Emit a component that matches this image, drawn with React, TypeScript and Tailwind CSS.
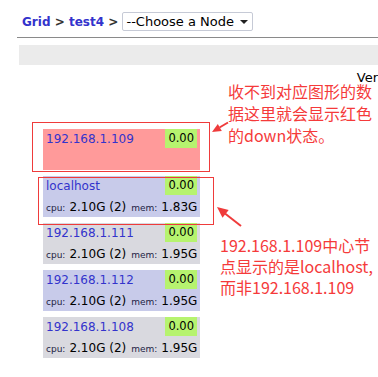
import React from "react";

type Node = {
  host: string;
  load: string;
  cpu?: string;
  mem?: string;
  bg: string;
};

const nodes: Node[] = [
  { host: "192.168.1.109", load: "0.00", bg: "bg-[#ff9a9a]" },
  { host: "localhost", load: "0.00", cpu: "2.10G (2)", mem: "1.83G", bg: "bg-[#c8cbea]" },
  { host: "192.168.1.111", load: "0.00", cpu: "2.10G (2)", mem: "1.95G", bg: "bg-[#d9d9df]" },
  { host: "192.168.1.112", load: "0.00", cpu: "2.10G (2)", mem: "1.95G", bg: "bg-[#c8cbea]" },
  { host: "192.168.1.108", load: "0.00", cpu: "2.10G (2)", mem: "1.95G", bg: "bg-[#d9d9df]" },
];

function NodeCard({ node }: { node: Node }) {
  return (
    <div className={`${node.bg} h-[41px] pl-[3px] pr-[3px]`}>
      <div className="flex h-[19px] items-center justify-between">
        <span className="text-[12px] text-[#3333cc]">{node.host}</span>
        <span className="flex h-[19px] items-center bg-[#b6f36f] px-[3px] text-[11.5px] text-black">
          {node.load}
        </span>
      </div>
      {node.cpu && (
        <div className="mt-[4px] flex h-[16px] items-baseline whitespace-nowrap leading-[16px]">
          <span className="text-[9px] text-[#222244]">cpu:</span>
          <span className="ml-[4px] text-[12px] text-black">{node.cpu}</span>
          <span className="ml-[5px] text-[9px] text-[#222244]">mem:</span>
          <span className="ml-[4px] text-[12px] text-black">{node.mem}</span>
        </div>
      )}
    </div>
  );
}

export default function App() {
  return (
    <div className="relative h-[377px] w-[378px] overflow-hidden bg-white font-['DejaVu_Sans',sans-serif]">
      {/* breadcrumb */}
      <div className="mt-[12px] flex h-[19px] items-center whitespace-nowrap pl-[22px]">
        <span className="text-[12px] font-bold text-[#3333cc]">Grid</span>
        <span className="whitespace-pre text-[12px] font-bold text-[#333]"> &gt; </span>
        <span className="text-[12px] font-bold text-[#3333cc]">test4</span>
        <span className="whitespace-pre text-[12px] font-bold text-[#333]"> &gt; </span>
        <div className="flex h-[19px] w-[131px] items-center justify-between rounded-[2px] border border-[#c6cad6] bg-white pl-[3px] pr-[4px]">
          <span className="text-[13px] text-black">--Choose a Node</span>
          <svg width="8" height="4" viewBox="0 0 8 4">
            <polygon points="0,0 8,0 4,4" fill="#222" />
          </svg>
        </div>
      </div>

      <div className="ml-[17px] mt-[6px] h-px bg-[#8a8a8a]" />
      <div className="ml-[19px] mt-[7px] h-[20px] bg-[#ebebeb]" />

      <div className="mt-[6px] flex h-[14px] justify-end pr-0 text-[13px] leading-[14px] text-black">
        <span className="whitespace-nowrap">Ver</span>
      </div>

      {/* nodes */}
      <div className="ml-[43px] mt-[44px] flex w-[157px] flex-col gap-[6px]">
        {nodes.map((n) => (
          <NodeCard key={n.host} node={n} />
        ))}
      </div>

      {/* annotation boxes */}
      <div className="pointer-events-none absolute left-[32px] top-[122px] h-[50px] w-[178px] border border-[#ef3b3b]" />
      <div className="pointer-events-none absolute left-[38px] top-[177px] h-[48px] w-[176px] border border-[#ef3b3b]" />

      {/* annotation notes */}
      <div className="absolute left-[228px] top-[80px] whitespace-nowrap font-['Noto_Sans_CJK_SC',sans-serif] text-[16px] leading-[22px] text-[#f53a3a]">
        <div>收不到对应图形的数</div>
        <div>据这里就会显示红色</div>
        <div>的down状态。</div>
      </div>
      <div className="absolute left-[220px] top-[235px] whitespace-nowrap font-['Noto_Sans_CJK_SC',sans-serif] text-[16px] leading-[21px] text-[#f53a3a]">
        <div>192.168.1.109中心节</div>
        <div>点显示的是localhost,</div>
        <div>而非192.168.1.109</div>
      </div>

      {/* arrows */}
      <svg className="pointer-events-none absolute left-0 top-0" width="378" height="377">
        <line x1="228" y1="122.5" x2="219.5" y2="127.5" stroke="#ef3b3b" strokeWidth="2" />
        <polygon points="212,132 221.8,131.1 217.8,124.1" fill="#ef3b3b" />
        <line x1="241" y1="226" x2="225" y2="213.5" stroke="#ef3b3b" strokeWidth="2" />
        <polygon points="217,207 228.7,209.9 222.5,217.7" fill="#ef3b3b" />
      </svg>
    </div>
  );
}
